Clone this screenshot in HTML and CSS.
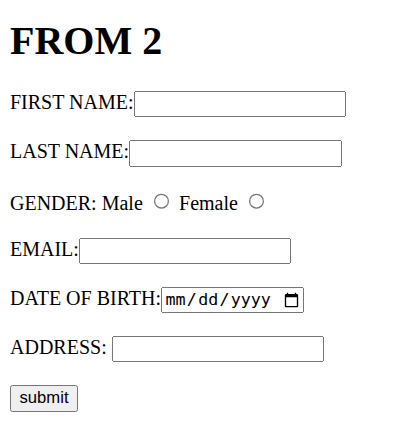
FILE: index.html
```html
<!DOCTYPE html>
<html>
<head>
<meta charset="utf-8">
<link rel="stylesheet" href="styles.css">
</head>
<body class="page">
<h1 class="title">FROM 2</h1>
<form class="form">
<label>FIRST NAME:</label><input type="text" class="field"><br><br>
<label>LAST NAME:</label><input type="text" class="field"><br><br>
<label>GENDER:</label> Male <input type="radio" name="gender" class="radio"> Female <input type="radio" name="gender" class="radio"><br><br>
<label>EMAIL:</label><input type="email" class="field"><br><br>
<label>DATE OF BIRTH:</label><input type="date" class="field date"><br><br>
<label>ADDRESS: </label> <input type="text" class="field"><br><br>
<input type="submit" value="submit" class="btn">
</form>
</body>
</html>
```

FILE: styles.css
```css
html {
  zoom: 1.25;
}
.page {
  margin: 13.4px 8px 8px;
  font-family: "Liberation Serif", serif;
  font-size: 16px;
  color: #000;
  background: #fff;
}
.title {
  font-size: 2em;
  font-weight: bold;
  margin: 0 0 0.67em;
}
.form {
  margin: 0;
}
.field {
  box-sizing: border-box;
  width: 170px;
}
.field.date {
  width: 114.5px;
}
```
